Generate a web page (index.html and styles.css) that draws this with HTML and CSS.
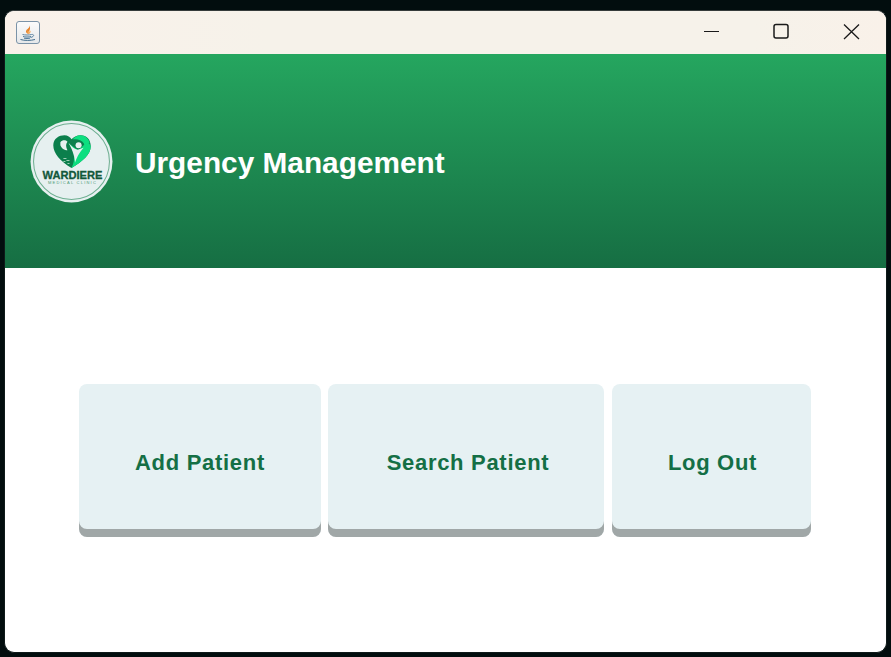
FILE: index.html
```html
<!DOCTYPE html>
<html lang="en">
<head>
    <meta charset="UTF-8">
    <title>Urgency Management</title>
    <link rel="stylesheet" href="styles.css">
</head>
<body>
    <div class="window">
        <div class="titlebar">
            <div class="app-icon">
                <svg width="18" height="18" viewBox="0 0 18 18">
                    <path d="M10.5 1 C11.5 4 7 5 7 7.5 C7 9 8.5 10 10 10 C8.5 8 12.5 6 10.5 1Z" fill="#e8832a"/>
                    <path d="M9 6 C9 8 11 8 11.5 6.5 C12 8 11 9.5 10 10 C8.5 9.5 8 7.5 9 6Z" fill="#f4ad62"/>
                    <path d="M3.5 10.5 C6 11.2 10 11.2 12.5 10.5" stroke="#5f86a3" stroke-width="1" fill="none"/>
                    <path d="M4 12.5 C6 13.2 10 13.2 12 12.5 M5 14.2 C7 14.6 9 14.6 11 14.2" stroke="#4d7999" stroke-width="1" fill="none"/>
                    <path d="M12.5 10.5 C15.5 10 15.5 12.8 11.5 13.5" stroke="#5f86a3" stroke-width="1" fill="none"/>
                    <path d="M1.5 15.5 C5 16.7 12 16.7 16 15.5" stroke="#3f6a8a" stroke-width="1" fill="none"/>
                </svg>
            </div>
            <div class="controls">
                <svg width="70" height="21" viewBox="0 0 70 21"><path d="M28 9.5 H43" stroke="#1a1a1a" stroke-width="1"/></svg>
                <svg width="70" height="21" viewBox="0 0 70 21"><rect x="28" y="2.5" width="14" height="13.5" rx="2" fill="none" stroke="#1a1a1a" stroke-width="1.5"/></svg>
                <svg width="70" height="21" viewBox="0 0 70 21"><path d="M28 2.5 L43 17 M43 2.5 L28 17" stroke="#1a1a1a" stroke-width="1.3"/></svg>
            </div>
        </div>

        <div class="header">
            <svg class="logo" width="83" height="83" viewBox="0 0 82 82">
                <circle cx="41" cy="41" r="40.5" fill="#e6f0f0"/>
                <circle cx="41" cy="41" r="37.5" fill="none" stroke="#6dae90" stroke-width="1"/>
                <path d="M41 47.5 C30 41 23 33 23 25 C23 18 29 15 34 15 C37 15 40 17 41 19 C43 17 46 15 50 15 C56 15 60 19 60 26 C60 34 52 41 41 47.5Z" fill="#0b7f4c"/>
                <path d="M41 47.5 C46 38 43 29 38 23 C42 26 45 28 48 30 L56 22 C58 23 60 24 60 26 C60 34 52 41 41 47.5Z" fill="#0ddf80"/>
                <path d="M48 15.2 C54 14.6 58 18 59 23 L54 25 C52 19 46 19 42 19 C44 17 46 15.5 48 15.2Z" fill="#0ddf80"/>
                <circle cx="48" cy="25" r="3" fill="#e6f0f0"/>
                <path d="M38 22.5 C41 26 44 29 47 29.5 L53 27.5 C50 31 47 35 44.5 42 C44 34 41 28 38 22.5Z" fill="#e6f0f0"/>
                <path d="M30 22 C32 19.5 35 19.5 37 21.5 C35 24 35.5 27 37 30 C34 30 31 28 30 25Z" fill="#e6f0f0"/>
                <path d="M33 38 H36 M36 40 H39 M33 41 H35 M37 43 H39" stroke="#9fcfb6" stroke-width="1"/>
                <text class="logo-name" x="42" y="58" text-anchor="middle">WARDIERE</text>
                <text class="logo-sub" x="42" y="63" text-anchor="middle">MEDICAL CLINIC</text>
            </svg>
            <h1>Urgency Management</h1>
        </div>

        <div class="content">
            <button class="action add">Add Patient</button>
            <button class="action search">Search Patient</button>
            <button class="action logout">Log Out</button>
        </div>
    </div>
</body>
</html>
```

FILE: styles.css
```css
html, body {
    margin: 0;
    height: 100%;
}
body {
    background: #020d0e;
    padding: 10px 4px 4px 4px;
    box-sizing: border-box;
    height: 657px;
    overflow: hidden;
    font-family: "Liberation Sans", Arial, sans-serif;
}
.window {
    height: 100%;
    box-sizing: border-box;
    border: 1px solid #0f1a1a;
    border-top-color: #353b3b;
    border-radius: 10px;
    overflow: hidden;
    background: white;
    display: flex;
    flex-direction: column;
}
.titlebar {
    height: 43px;
    background: linear-gradient(90deg, #f9f1ea 0%, #f6f2ea 30%, #f6f2ea 85%, #f9f1e9 100%);
    display: flex;
    justify-content: space-between;
    align-items: center;
    padding-left: 11px;
    flex-shrink: 0;
}
.app-icon {
    width: 22px;
    height: 21px;
    border: 1px solid #7b93a8;
    border-radius: 3px;
    background: linear-gradient(#fbfbfb, #e6e8ea);
    display: flex;
    align-items: center;
    justify-content: center;
}
.controls {
    display: flex;
}
.header {
    height: 214px;
    flex-shrink: 0;
    background: linear-gradient(#25a65f, #166e43);
    display: flex;
    align-items: center;
    gap: 22px;
    padding-left: 25px;
}
.header h1 {
    margin: 4px 0 0 0;
    color: white;
    font-size: 29.8px;
    font-weight: bold;
}
.content {
    flex: 1;
    display: flex;
    gap: 7px;
    padding: 116px 75px 0 74px;
    align-items: flex-start;
}
.action {
    height: 153px;
    padding: 4px 0 0 0;
    border: none;
    border-radius: 8px;
    background: #e6f1f3;
    box-shadow: inset 0 -8px 0 #a0a7a7;
    color: #146f45;
    font-family: "Liberation Sans", Arial, sans-serif;
    font-size: 22px;
    font-weight: bold;
    letter-spacing: 0.7px;
}
.add {
    width: 242px;
}
.search {
    width: 276px;
    padding-left: 4px;
}
.logout {
    width: 199px;
    margin-left: 1px;
    padding-left: 2px;
}
.logo-name {
    font-family: "Liberation Sans", Arial, sans-serif;
    font-size: 11px;
    font-weight: bold;
    fill: #12583a;
    stroke: #12583a;
    stroke-width: 0.3px;
}
.logo-sub {
    font-family: "Liberation Sans", Arial, sans-serif;
    font-size: 4px;
    letter-spacing: 1.2px;
    fill: #4f9a78;
}
```
